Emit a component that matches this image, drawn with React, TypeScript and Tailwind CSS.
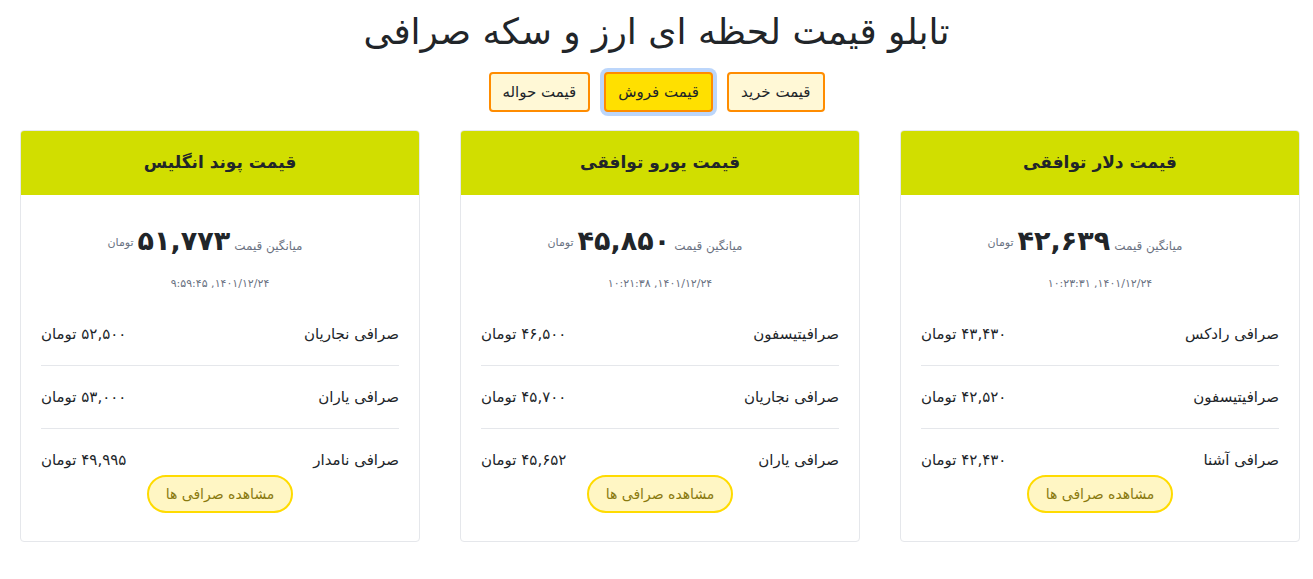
import React from 'react';

type Row = { name: string; price: string };
type Card = { title: string; avg: string; date: string; rows: Row[] };

const cards: Card[] = [
  {
    title: 'قیمت دلار توافقی',
    avg: '۴۲,۶۳۹',
    date: '۱۴۰۱/۱۲/۲۴, ۱۰:۲۳:۳۱',
    rows: [
      { name: 'صرافی رادکس', price: '۴۳,۴۳۰' },
      { name: 'صرافیتیسفون', price: '۴۲,۵۲۰' },
      { name: 'صرافی آشنا', price: '۴۲,۴۳۰' },
    ],
  },
  {
    title: 'قیمت یورو توافقی',
    avg: '۴۵,۸۵۰',
    date: '۱۴۰۱/۱۲/۲۴, ۱۰:۲۱:۳۸',
    rows: [
      { name: 'صرافیتیسفون', price: '۴۶,۵۰۰' },
      { name: 'صرافی نجاریان', price: '۴۵,۷۰۰' },
      { name: 'صرافی یاران', price: '۴۵,۶۵۲' },
    ],
  },
  {
    title: 'قیمت پوند انگلیس',
    avg: '۵۱,۷۷۳',
    date: '۱۴۰۱/۱۲/۲۴, ۹:۵۹:۴۵',
    rows: [
      { name: 'صرافی نجاریان', price: '۵۲,۵۰۰' },
      { name: 'صرافی یاران', price: '۵۳,۰۰۰' },
      { name: 'صرافی نامدار', price: '۴۹,۹۹۵' },
    ],
  },
];

const PriceCard = ({ card }: { card: Card }) => {
  return (
    <div className="border border-gray-200 rounded bg-white overflow-hidden">
      <div className="h-[64px] bg-[#d1de00] flex items-center justify-center text-[17px] font-bold text-[#212529]">
        {card.title}
      </div>
      <div className="px-5 pt-[26px] pb-7">
        <div className="flex items-end justify-center gap-1 h-[40px] pr-[30px]">
          <span className="text-[12px] text-gray-500 mb-[6px]">میانگین قیمت</span>
          <span className="text-[27px] font-bold text-[#212529] leading-[40px]">{card.avg}</span>
          <span className="text-[11px] text-gray-500 mb-[10px]">تومان</span>
        </div>
        <div className="text-center text-[11px] text-gray-500 mt-[14px] h-[18px] leading-[18px]">{card.date}</div>
        <div className="mt-[10px]">
          {card.rows.map((r, i) => (
            <div
              key={i}
              className={
                'flex items-center justify-between text-[15px] text-[#212529] leading-[30px] ' +
                (i < 2 ? 'py-4 border-b border-gray-200' : 'pt-4')
              }
            >
              <span>{r.name}</span>
              <span>{r.price} تومان</span>
            </div>
          ))}
        </div>
        <div className="flex justify-center">
          <button className="h-[38px] px-[17px] rounded-full bg-[#fff6c4] border-2 border-[#ffdb00] text-[#8a7a10] text-[14px]">
            مشاهده صرافی ها
          </button>
        </div>
      </div>
    </div>
  );
};

export default function App() {
  return (
    <div dir="rtl" className="min-h-screen bg-white font-['DejaVu_Sans',sans-serif] text-[#212529]">
      <h1 className="text-center text-[36px] leading-[48px] pt-[8px]">تابلو قیمت لحظه ای ارز و سکه صرافی</h1>
      <div className="flex justify-center gap-[14px] mt-[16px]">
        <button className="h-[40px] px-3 border-2 border-[#ff8c00] bg-[#fff8d6] rounded text-[15px]">قیمت خرید</button>
        <button className="h-[40px] px-3 border-2 border-[#ff8c00] bg-[#ffe000] rounded text-[15px] ring-4 ring-[#bcd6fb]">قیمت فروش</button>
        <button className="h-[40px] px-3 border-2 border-[#ff8c00] bg-[#fff8d6] rounded text-[15px]">قیمت حواله</button>
      </div>
      <div className="w-[1280px] mr-[13px] mt-[18px] grid grid-cols-3 gap-10">
        {cards.map((c, i) => (
          <PriceCard key={i} card={c} />
        ))}
      </div>
    </div>
  );
}
